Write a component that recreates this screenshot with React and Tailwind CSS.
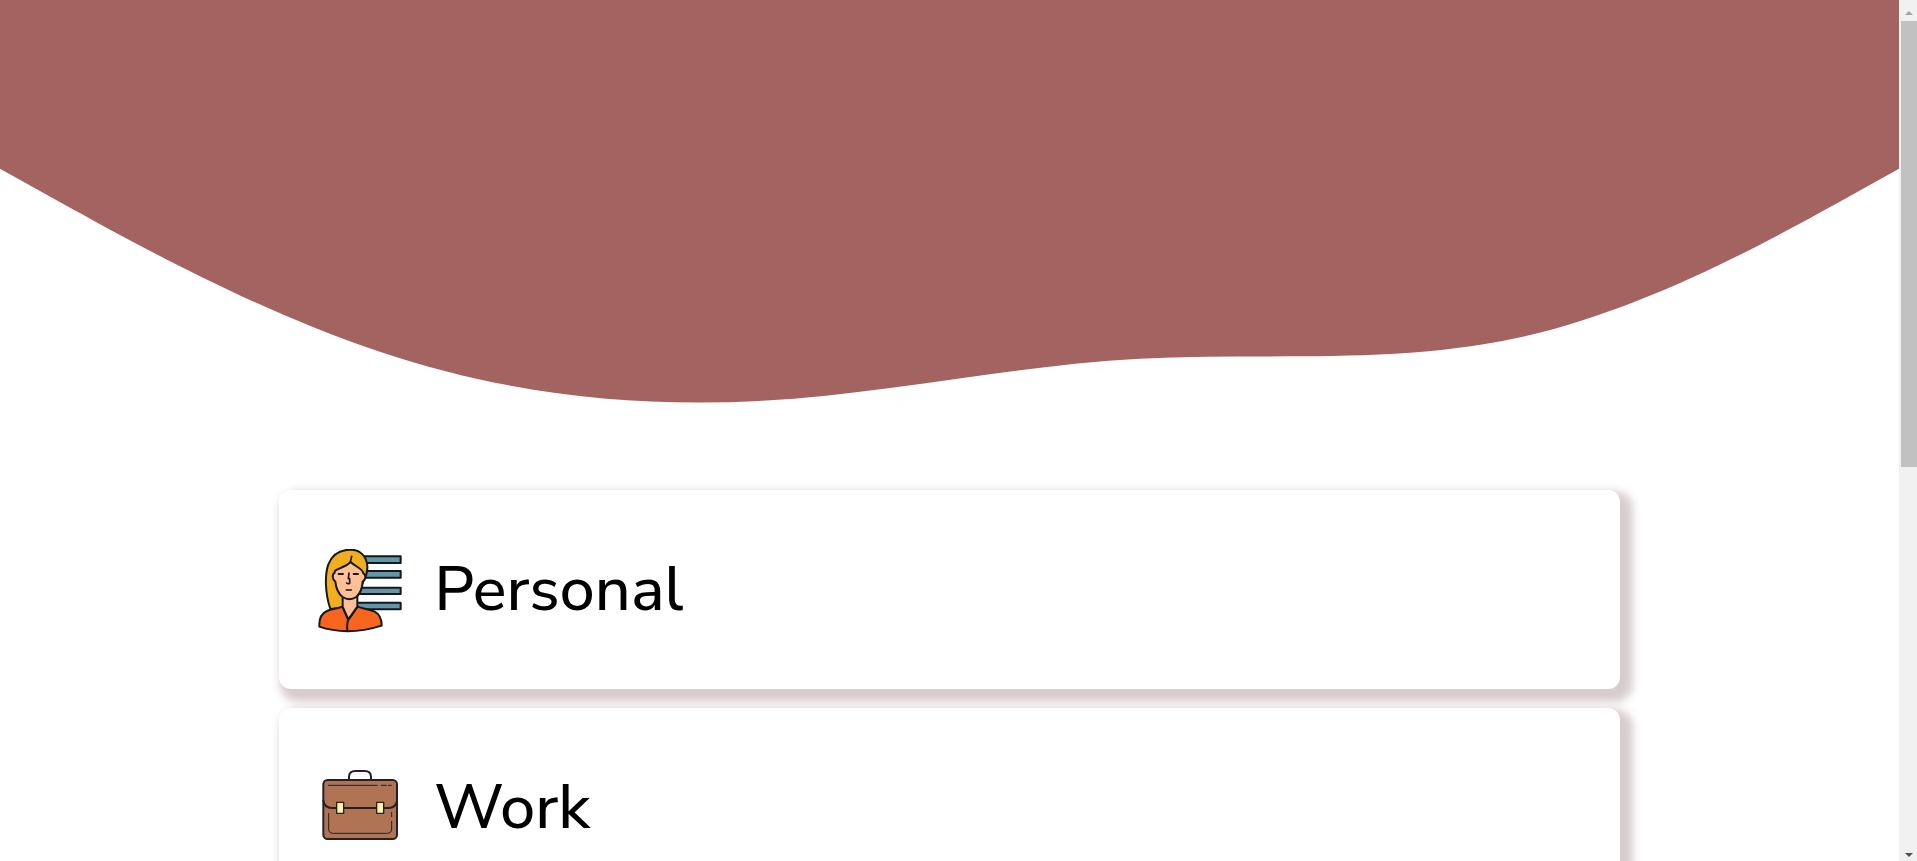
function PersonalIcon() {
  return (
    <svg viewBox="24 27 252 252" className="size-21 shrink-0" aria-hidden="true" stroke="#15191c" strokeWidth="6" strokeLinejoin="round" strokeLinecap="round">
      <g fill="#6396a8">
        <rect x="150" y="49" width="122" height="20" />
        <rect x="150" y="93" width="122" height="20" />
        <rect x="140" y="143" width="132" height="19" />
        <rect x="140" y="188" width="132" height="20" />
      </g>
      <path fill="#f2ae1e" d="M61 207C45 160 44 104 55 73C67 43 91 29 122 29C151 29 169 48 172 78C173 94 169 108 161 122L137 180L98 203Z" />
      <path fill="#ffbf97" stroke="none" d="M98 165V201L115 236L143 201V165Z" />
      <path fill="none" d="M98 170V200M142 169V199" />
      <path fill="#ffbf97" d="M74 98C66 103 66 119 76 125C78 145 85 161 98 171Q118 184 139 171C151 160 157 144 158 125C168 119 169 105 160 100C158 86 136 80 122 66C108 80 88 84 77 91Q73 94 74 98Z" />
      <path fill="none" strokeWidth="5" d="M121 66L125 49M117 99L115 116M119 116V130Q114 133 110 129M109 150H124" />
      <path fill="none" d="M86 102H99M131 102H144" />
      <path fill="#f7651f" d="M28 260C27 235 34 220 51 213C66 206 80 207 97 200L115 240L143 200C158 206 178 207 194 215C208 222 215 240 215 257Q162 274 113 274Q65 273 28 260Z" />
      <path fill="#ffbf97" stroke="none" d="M98 198L115 234L142 198Z" />
      <path fill="none" d="M98 200L115 238L142 200M115 238Q110 251 112 272" />
    </svg>
  );
}

function WorkIcon() {
  return (
    <svg viewBox="24 21 252 252" className="size-21 shrink-0" aria-hidden="true" stroke="#1f212b" strokeWidth="6" strokeLinecap="round" strokeLinejoin="round">
      <path fill="none" d="M117 58V51Q117 33 136 33H164Q183 33 183 51V58" />
      <rect x="40" y="60" width="221" height="177" rx="13" fill="#b07454" />
      <path fill="none" d="M40 122Q43 144 66 144H235Q258 144 261 122" />
      <path fill="none" strokeWidth="3" d="M55 76H202M214 76H229M235 76H244M56 160V207Q56 220 70 220H230Q245 220 245 207V184M245 157V170" />
      <rect x="80" y="127" width="21" height="33" fill="#fff2a8" strokeWidth="4" />
      <rect x="200" y="127" width="21" height="33" fill="#fff2a8" strokeWidth="4" />
    </svg>
  );
}

const categories = [
  { name: "Personal", Icon: PersonalIcon },
  { name: "Work", Icon: WorkIcon },
];

function Scrollbar() {
  return (
    <div className="flex w-[18px] shrink-0 flex-col bg-[#f1f1f1] pl-0.5" aria-hidden="true">
      <div className="flex h-[21px] shrink-0 items-center justify-center pt-1">
        <svg viewBox="0 0 8 4" className="h-1 w-2" fill="#a3a3a3"><path d="M4 0L8 4H0Z" /></svg>
      </div>
      <div className="min-h-0 flex-1">
        <div className="h-[54.4%] bg-[#c1c1c1]" />
      </div>
      <div className="flex h-[21px] shrink-0 items-center justify-center pt-2">
        <svg viewBox="0 0 8 4" className="h-1 w-2" fill="#505050"><path d="M4 4L0 0H8Z" /></svg>
      </div>
    </div>
  );
}

export default function App() {
  return (
    <div className="flex h-screen overflow-hidden bg-white text-black">
      <div className="min-w-0 flex-1 overflow-hidden">
        <header>
          <svg viewBox="0 0 1440 320" className="block w-full" fill="#a36361" aria-hidden="true">
            <path d="M0,128L48,154.7C96,181,192,235,288,266.7C384,299,480,309,576,304C672,299,768,277,864,272C960,267,1056,277,1152,256C1248,235,1344,181,1392,154.7L1440,128V0H0Z" />
          </svg>
        </header>
        <main className="flex flex-col gap-[19px] px-[14.7%] pt-[68px]">
          {categories.map(({ name, Icon }) => (
            <a key={name} href={"#" + name.toLowerCase()} className="flex items-start gap-8 rounded-xl bg-white px-[39px] pt-[59px] pb-14 shadow-[7px_7px_8px_6px_#d8cdce]">
              <Icon />
              <h2 className="font-['Nunito_Sans','Nunito','Lato',sans-serif] text-[63px] leading-20 font-medium">{name}</h2>
            </a>
          ))}
        </main>
      </div>
      <Scrollbar />
    </div>
  );
}
